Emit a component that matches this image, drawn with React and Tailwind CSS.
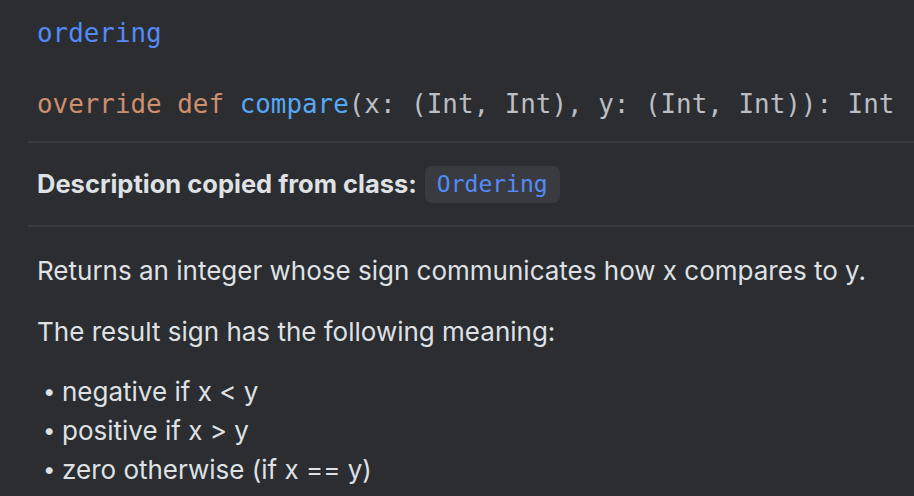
export default function App() {
  const mono = { fontFamily: '"DejaVu Sans Mono", "Liberation Mono", monospace' };
  const sans = { fontFamily: 'Inter, "Noto Sans", sans-serif' };

  return (
    <div className="w-[914px] h-[496px] overflow-hidden bg-[#2b2d30] pl-[28px]" style={sans}>
      <div className="pl-[9px] pt-[16px] pb-[20px] text-[25.9px] leading-[34px] whitespace-nowrap" style={mono}>
        <div className="text-[#548af7]">ordering</div>
        <div className="mt-[37px] text-[#bcbec4]">
          <span className="text-[#cf8e6d]">override def </span>
          <span className="text-[#56a8f5]">compare</span>
          (x: (Int, Int), y: (Int, Int)): Int
        </div>
      </div>

      <div className="border-t-2 border-[#393b40] h-[84px] flex items-center pl-[9px] gap-[8px] whitespace-nowrap">
        <span className="text-[25.5px] font-bold text-[#dfe1e5]">Description copied from class:</span>
        <span className="bg-[#393b40] rounded-[7px] px-[12px] h-[37px] flex items-center text-[23px] text-[#548af7]" style={mono}>
          Ordering
        </span>
      </div>

      <div className="border-t-2 border-[#393b40] pl-[9px] pt-[24px] text-[26px] leading-[39px] text-[#dfe1e5] whitespace-nowrap">
        <p>Returns an integer whose sign communicates how x compares to y.</p>
        <p className="mt-[22px]">The result sign has the following meaning:</p>
        <ul className="mt-[21px] pl-[6px]">
          {['negative if x < y', 'positive if x > y', 'zero otherwise (if x == y)'].map((t) => (
            <li key={t} className="flex items-center">
              <span className="w-[19px] text-[22px]">•</span>
              <span>{t}</span>
            </li>
          ))}
        </ul>
      </div>
    </div>
  );
}
